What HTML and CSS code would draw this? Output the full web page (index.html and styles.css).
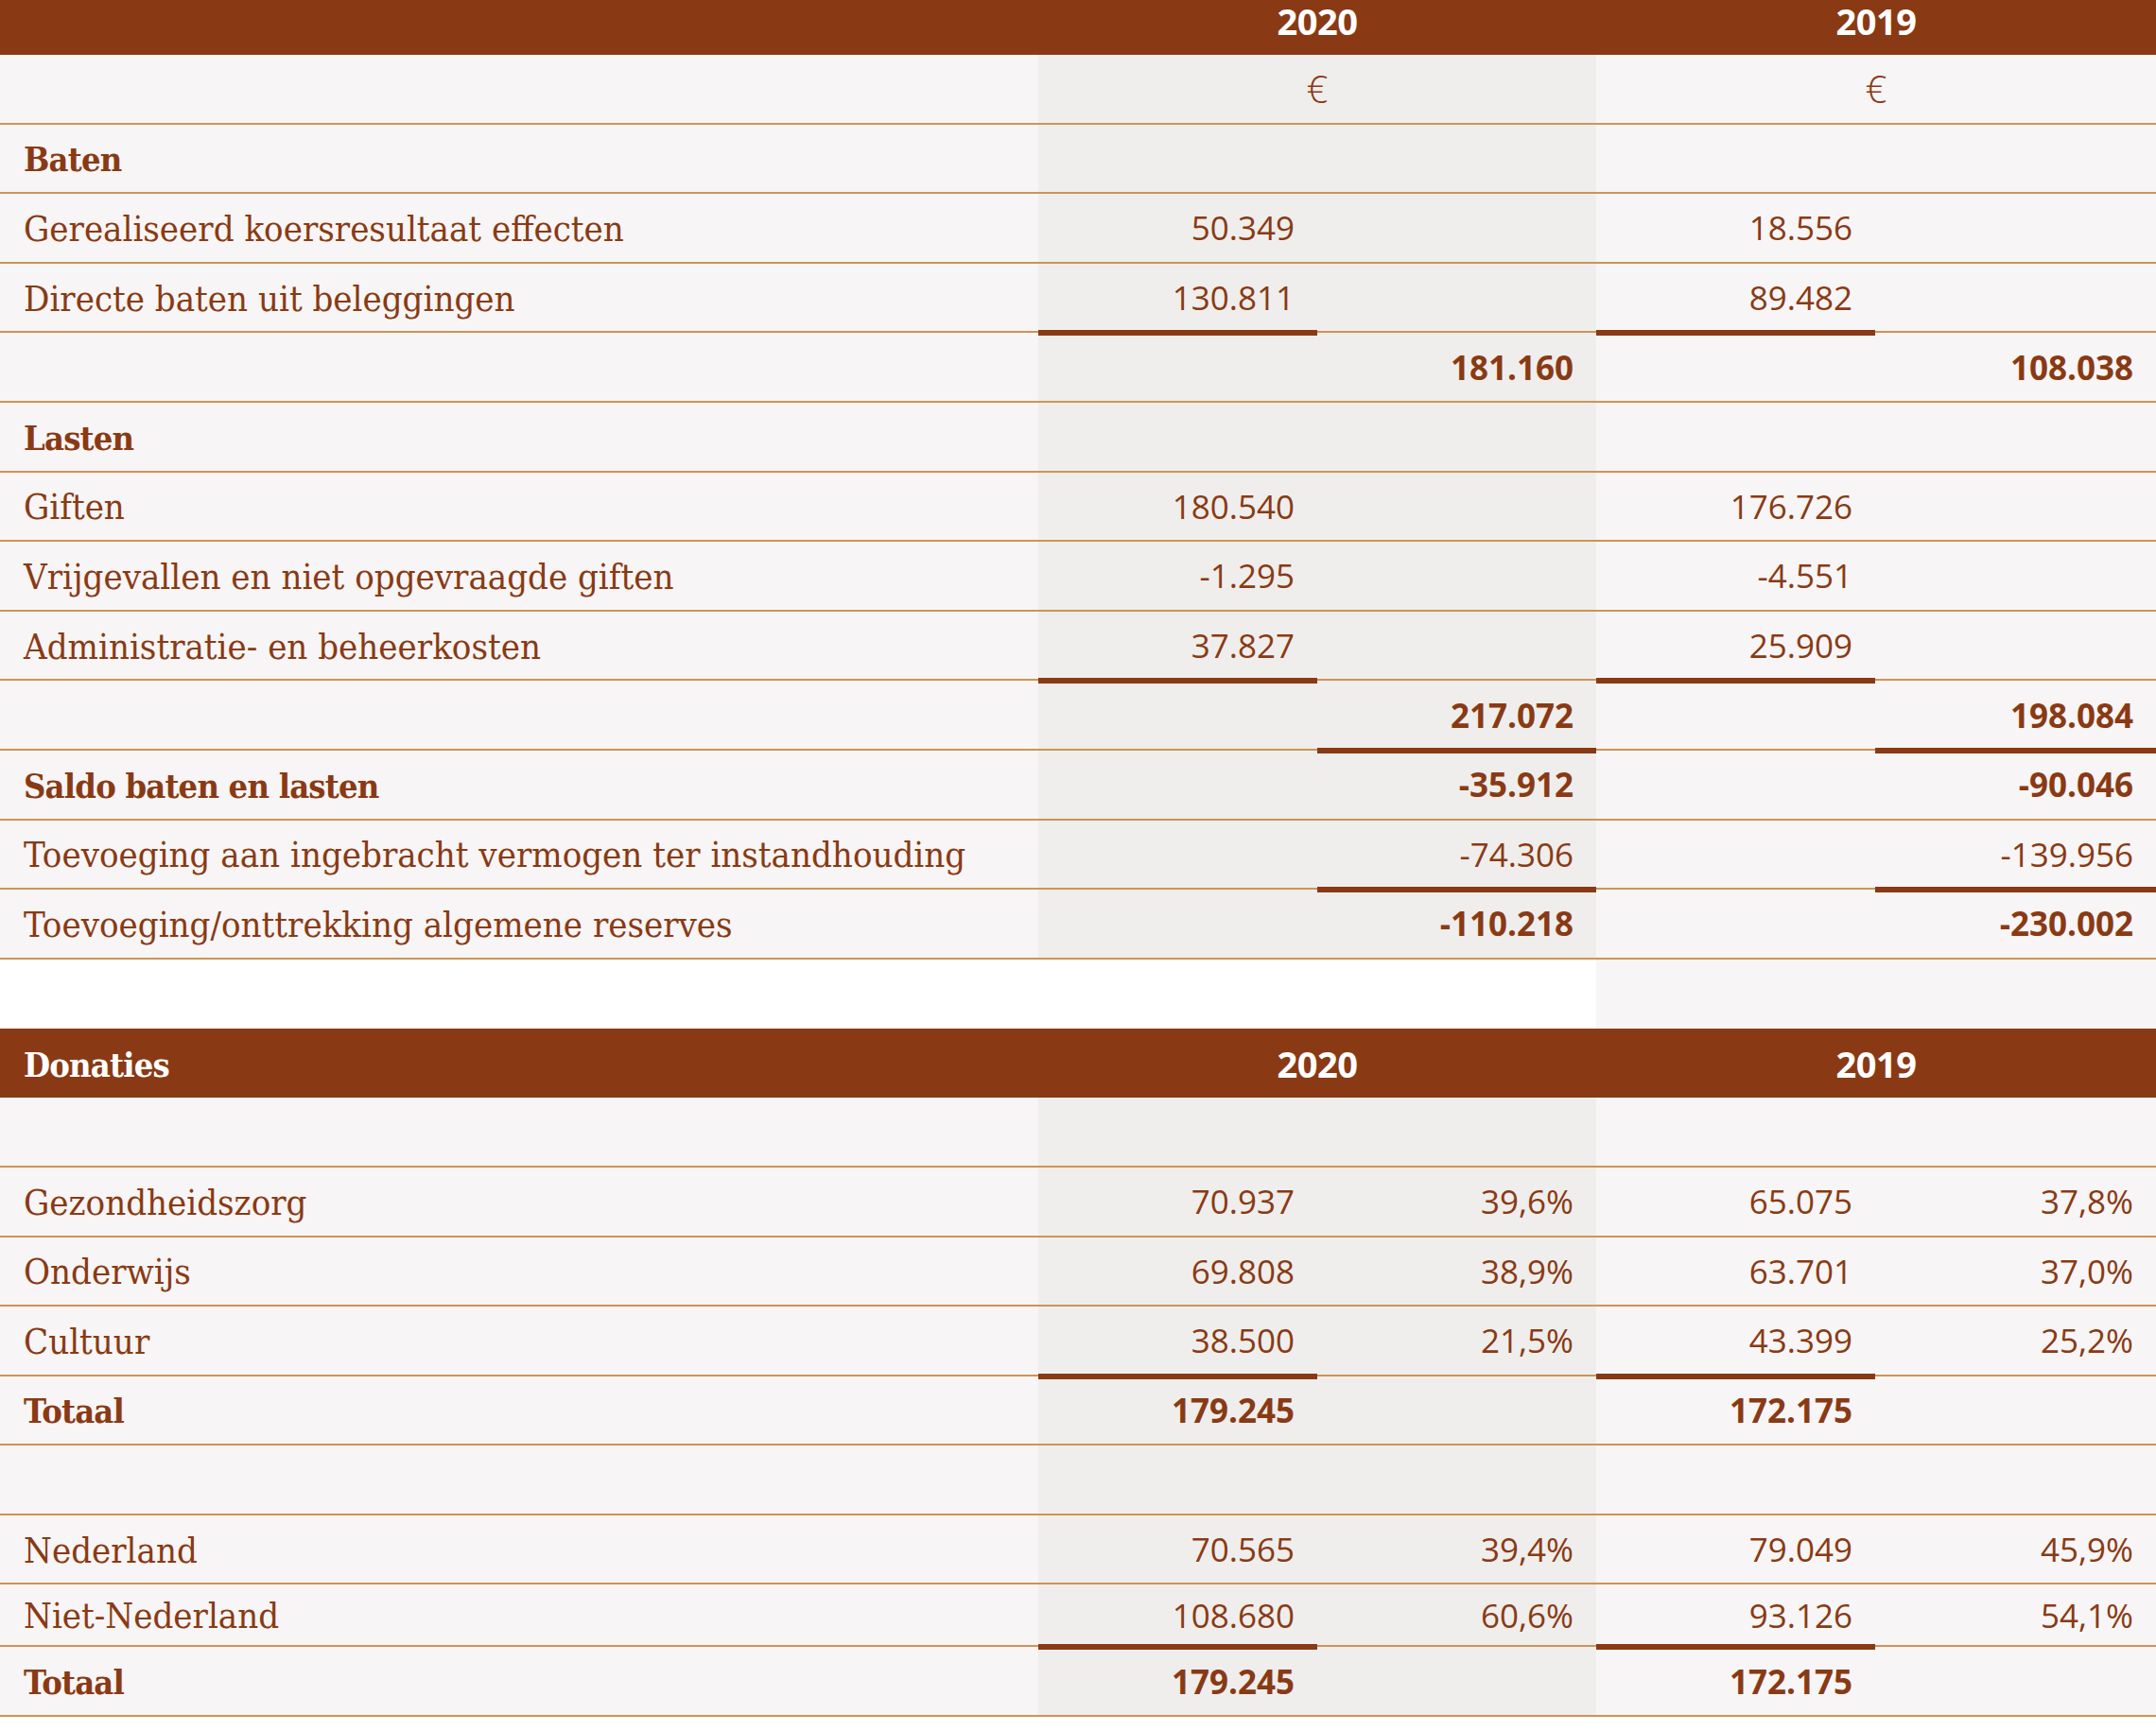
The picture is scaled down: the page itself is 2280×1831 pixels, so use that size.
FILE: index.html
```html
<!DOCTYPE html>
<html lang="nl">
<head>
<meta charset="utf-8">
<title>Staat van baten en lasten</title>
<link rel="stylesheet" href="styles.css">
</head>
<body>
<div class="sheet">
  <div class="row head top">
    <div class="c lab"></div>
    <div class="c yr span2">2020</div>
    <div class="c yr span2">2019</div>
  </div>
  <div class="row">
    <div class="c lab"></div>
    <div class="c n g span2 cur">€</div>
    <div class="c n span2 cur">€</div>
  </div>
  <div class="row">
    <div class="c lab bold">Baten</div>
    <div class="c n g"></div><div class="c n g"></div><div class="c n"></div><div class="c n"></div>
  </div>
  <div class="row">
    <div class="c lab">Gerealiseerd koersresultaat effecten</div>
    <div class="c n g">50.349</div><div class="c n g"></div><div class="c n">18.556</div><div class="c n"></div>
  </div>
  <div class="row">
    <div class="c lab">Directe baten uit beleggingen</div>
    <div class="c n g u">130.811</div><div class="c n g"></div><div class="c n u">89.482</div><div class="c n"></div>
  </div>
  <div class="row">
    <div class="c lab"></div>
    <div class="c n g"></div><div class="c n g bold">181.160</div><div class="c n"></div><div class="c n bold">108.038</div>
  </div>
  <div class="row">
    <div class="c lab bold">Lasten</div>
    <div class="c n g"></div><div class="c n g"></div><div class="c n"></div><div class="c n"></div>
  </div>
  <div class="row">
    <div class="c lab">Giften</div>
    <div class="c n g">180.540</div><div class="c n g"></div><div class="c n">176.726</div><div class="c n"></div>
  </div>
  <div class="row">
    <div class="c lab">Vrijgevallen en niet opgevraagde giften</div>
    <div class="c n g">-1.295</div><div class="c n g"></div><div class="c n">-4.551</div><div class="c n"></div>
  </div>
  <div class="row">
    <div class="c lab">Administratie- en beheerkosten</div>
    <div class="c n g u">37.827</div><div class="c n g"></div><div class="c n u">25.909</div><div class="c n"></div>
  </div>
  <div class="row">
    <div class="c lab"></div>
    <div class="c n g"></div><div class="c n g bold u">217.072</div><div class="c n"></div><div class="c n bold u">198.084</div>
  </div>
  <div class="row">
    <div class="c lab bold">Saldo baten en lasten</div>
    <div class="c n g"></div><div class="c n g bold">-35.912</div><div class="c n"></div><div class="c n bold">-90.046</div>
  </div>
  <div class="row">
    <div class="c lab">Toevoeging aan ingebracht vermogen ter instandhouding</div>
    <div class="c n g"></div><div class="c n g u">-74.306</div><div class="c n"></div><div class="c n u">-139.956</div>
  </div>
  <div class="row">
    <div class="c lab">Toevoeging/onttrekking algemene reserves</div>
    <div class="c n g"></div><div class="c n g bold">-110.218</div><div class="c n"></div><div class="c n bold">-230.002</div>
  </div>

  <div class="row spacer">
    <div class="c blank"></div>
    <div class="c light"></div>
  </div>

  <div class="row head">
    <div class="c lab bold">Donaties</div>
    <div class="c yr span2">2020</div>
    <div class="c yr span2">2019</div>
  </div>
  <div class="row">
    <div class="c lab"></div>
    <div class="c n g"></div><div class="c n g"></div><div class="c n"></div><div class="c n"></div>
  </div>
  <div class="row">
    <div class="c lab">Gezondheidszorg</div>
    <div class="c n g">70.937</div><div class="c n g">39,6%</div><div class="c n">65.075</div><div class="c n">37,8%</div>
  </div>
  <div class="row">
    <div class="c lab">Onderwijs</div>
    <div class="c n g">69.808</div><div class="c n g">38,9%</div><div class="c n">63.701</div><div class="c n">37,0%</div>
  </div>
  <div class="row">
    <div class="c lab">Cultuur</div>
    <div class="c n g u">38.500</div><div class="c n g">21,5%</div><div class="c n u">43.399</div><div class="c n">25,2%</div>
  </div>
  <div class="row">
    <div class="c lab bold">Totaal</div>
    <div class="c n g bold">179.245</div><div class="c n g"></div><div class="c n bold">172.175</div><div class="c n"></div>
  </div>
  <div class="row">
    <div class="c lab"></div>
    <div class="c n g"></div><div class="c n g"></div><div class="c n"></div><div class="c n"></div>
  </div>
  <div class="row">
    <div class="c lab">Nederland</div>
    <div class="c n g">70.565</div><div class="c n g">39,4%</div><div class="c n">79.049</div><div class="c n">45,9%</div>
  </div>
  <div class="row short">
    <div class="c lab">Niet-Nederland</div>
    <div class="c n g u">108.680</div><div class="c n g">60,6%</div><div class="c n u">93.126</div><div class="c n">54,1%</div>
  </div>
  <div class="row">
    <div class="c lab bold">Totaal</div>
    <div class="c n g bold">179.245</div><div class="c n g"></div><div class="c n bold">172.175</div><div class="c n"></div>
  </div>
</div>
</body>
</html>
```
FILE: styles.css
```css
html, body {
  margin: 0;
  padding: 0;
  background: #ffffff;
}

.sheet {
  width: 2280px;
  color: #893a14;
}

.row {
  display: grid;
  grid-template-columns: 1098px 295px 295px 295px 297px;
  height: 73.6px;
  box-sizing: border-box;
  border-bottom: 2px solid #cd9456;
  background: #f7f5f5;
}

.row.short {
  height: 66px;
}

.head {
  background: #893a14;
  color: #ffffff;
  border-bottom: none;
}

.head.top {
  height: 58px;
  padding-bottom: 15px;
}

.spacer {
  border-bottom: none;
  background: transparent;
  height: 73px;
}

.spacer .blank {
  grid-column: span 3;
  background: #ffffff;
}

.spacer .light {
  grid-column: span 2;
  background: #f7f5f5;
}

.c {
  display: flex;
  align-items: center;
  position: relative;
  line-height: 1;
  white-space: nowrap;
}

.lab {
  padding-left: 25px;
  font-family: "DejaVu Serif Condensed", "DejaVu Serif", serif;
  font-stretch: condensed;
  font-size: 38px;
  padding-top: 2px;
}

.lab.bold {
  font-size: 36px;
  letter-spacing: -0.8px;
}

.n {
  justify-content: flex-end;
  padding-right: 24px;
  font-family: "Open Sans", "Liberation Sans", sans-serif;
  font-weight: 400;
  font-size: 35px;
}

.g {
  background: #efeeec;
}

.span2 {
  grid-column: span 2;
  justify-content: center;
  padding-right: 0;
}

.yr {
  font-family: "Open Sans", "Liberation Sans", sans-serif;
  font-weight: 700;
  font-size: 38px;
  letter-spacing: -0.5px;
}

.cur {
  font-size: 40px;
  font-weight: 300;
}

.bold {
  font-weight: 700;
}

.u::after {
  content: "";
  position: absolute;
  z-index: 1;
  left: 0;
  right: 0;
  bottom: -5px;
  height: 6px;
  background: #893a14;
}
```
